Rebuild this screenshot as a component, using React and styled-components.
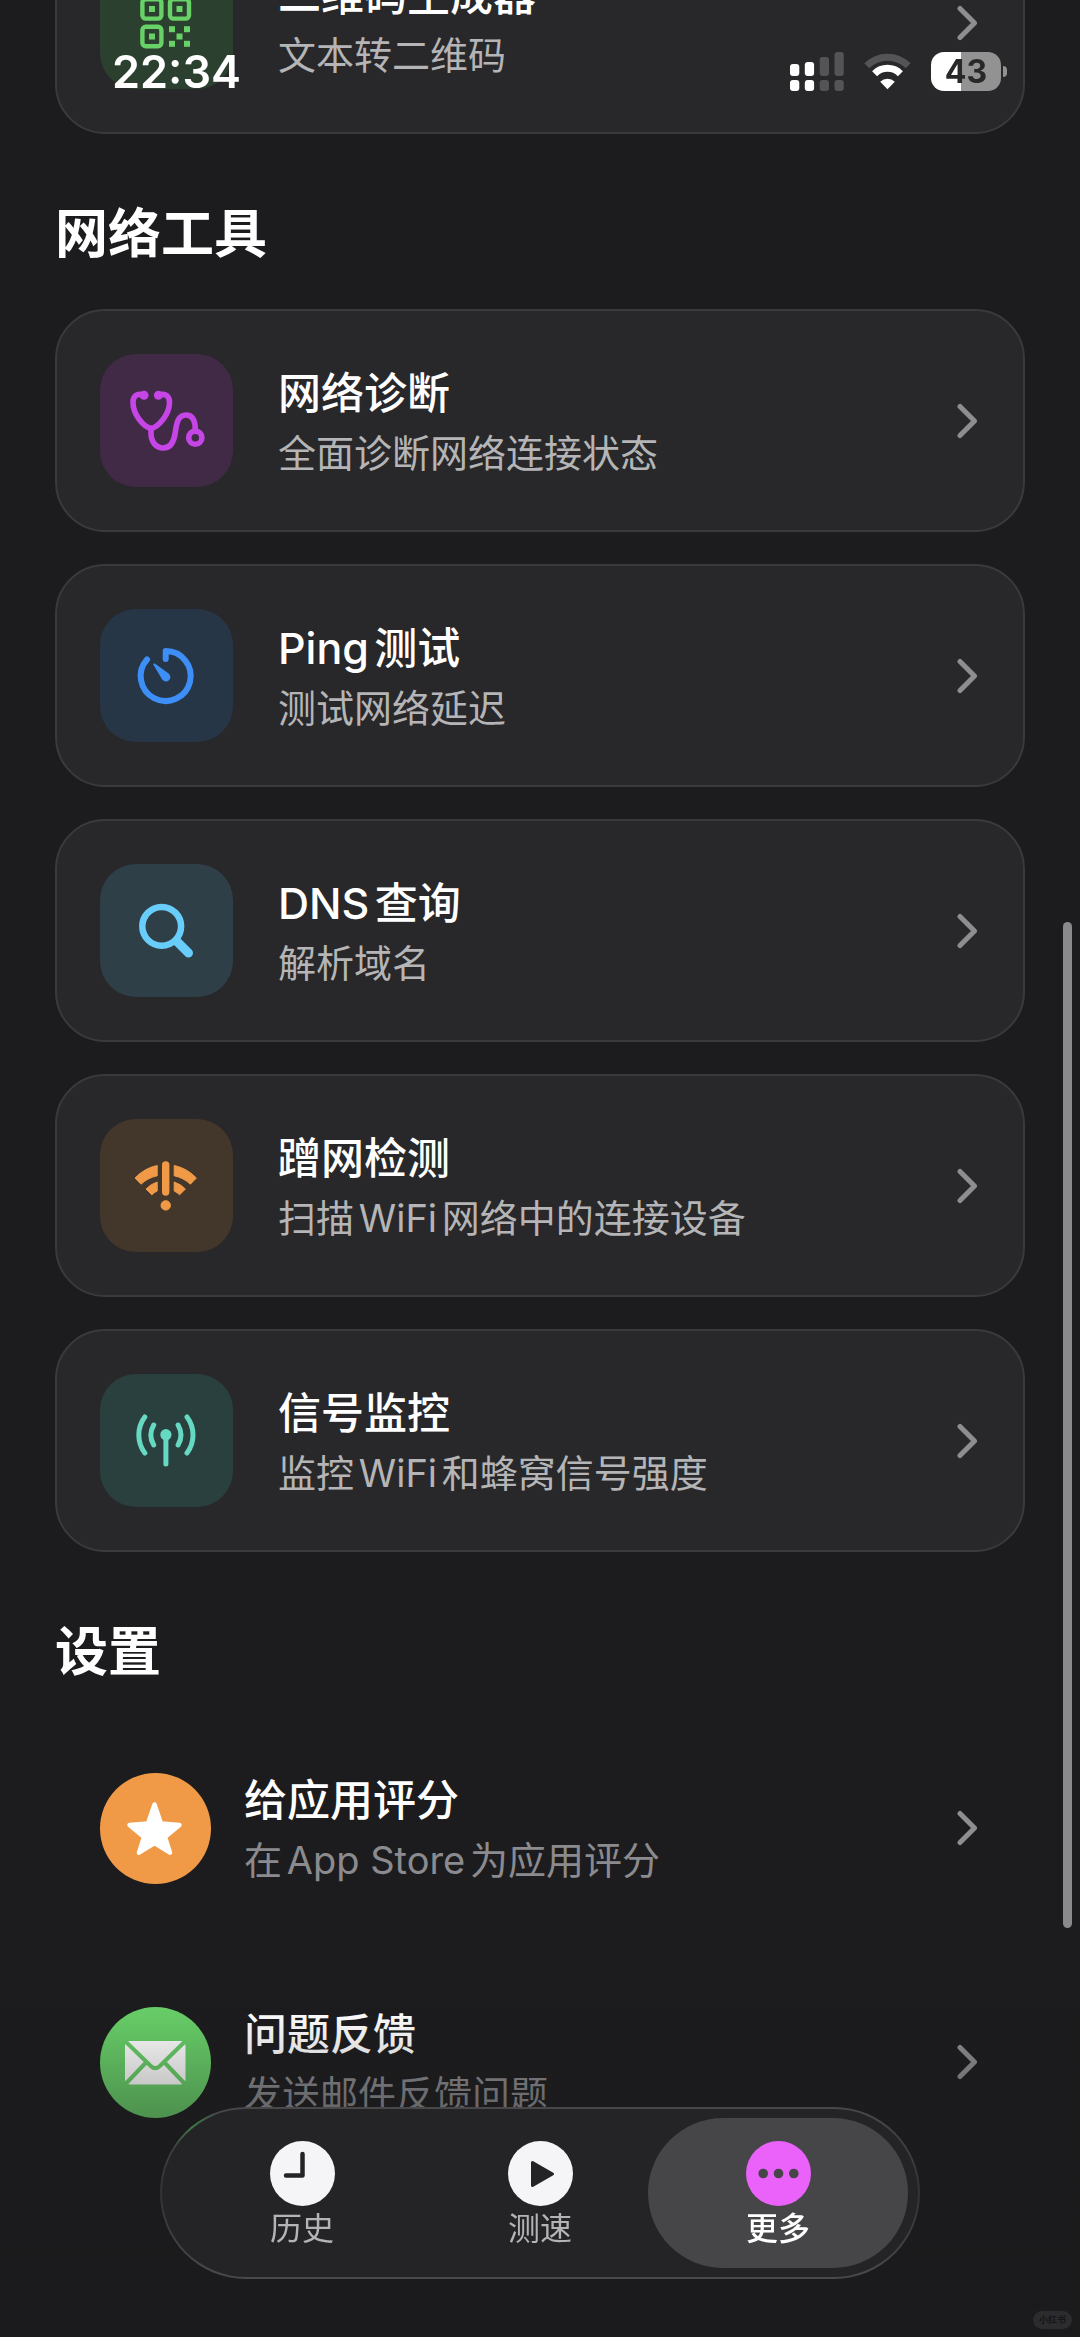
import styled, { createGlobalStyle } from 'styled-components';

const GlobalStyle = createGlobalStyle`
  * {
    box-sizing: border-box;
  }

  body {
    margin: 0;
    background: #1c1c1e;
    color: #ffffff;
    font-family: Inter, 'Noto Sans CJK SC', sans-serif;
    text-autospace: normal;
  }
`;

const Screen = styled.div`
  min-height: 100vh;
  overflow: hidden;
`;

const StatusBar = styled.header`
  position: fixed;
  top: 0;
  left: 0;
  right: 0;
  z-index: 3;
  display: flex;
  align-items: center;
  justify-content: space-between;
  height: 91px;
  padding: 52px 73px 0 112px;
  pointer-events: none;
`;

const Clock = styled.time`
  font-size: 45px;
  font-weight: 600;
  line-height: 39px;
`;

const StatusIcons = styled.div`
  display: flex;
  align-items: center;
  gap: 20px;
`;

const Battery = styled.div`
  display: flex;
  align-items: center;
  gap: 2px;
`;

const BatteryBody = styled.span`
  width: 70px;
  height: 39px;
  border-radius: 13px;
  background: linear-gradient(to right, #ffffff 43%, #929293 43%);
  color: #28282a;
  font-size: 32px;
  font-weight: 700;
  line-height: 39px;
  text-align: center;
`;

const BatteryTip = styled.span`
  width: 4px;
  height: 11px;
  border-radius: 0 6px 6px 0;
  background: #929293;
`;

const Content = styled.main`
  margin-top: -89px;
  padding: 0 55px;
`;

const Section = styled.section`
  & + & {
    margin-top: 68px;
  }
`;

const Heading = styled.h2`
  margin: 0 0 43px;
  font-size: 53px;
  font-weight: 700;
  line-height: 64px;
`;

const List = styled.ul`
  display: flex;
  flex-direction: column;
  gap: 32px;
  margin: 0;
  padding: 0;
  list-style: none;
`;

const Row = styled.a`
  display: flex;
  align-items: center;
  gap: 33px;
  padding: 44px 45px;
  color: inherit;
  text-decoration: none;
`;

const Card = styled(Row)`
  gap: 45px;
  padding: 43px;
  border: 2px solid #3a3a3c;
  border-radius: 50px;
  background: #28282a;
`;

const Tile = styled.svg`
  flex: none;
  width: 133px;
  height: 133px;
  border-radius: 36px;
  background: ${({ $bg }) => $bg};
  color: ${({ $color }) => $color};
`;

const Badge = styled.svg`
  flex: none;
  width: 111px;
  height: 111px;
  border-radius: 50%;
  background: ${({ $bg }) => $bg};
  color: ${({ $bg }) => $bg};
`;

const Texts = styled.div`
  display: flex;
  flex: 1;
  flex-direction: column;
  gap: 6px;
  min-width: 0;
`;

const Title = styled.span`
  font-size: 43px;
  font-weight: 500;
  line-height: 58px;
`;

const Subtitle = styled.span`
  color: ${({ $dim }) => ($dim ? '#8b8b8f' : '#b5b5b7')};
  font-size: 38px;
  line-height: 50px;
`;

const Arrow = styled.svg`
  flex: none;
  width: 26px;
  height: 36px;
`;

const ScrollThumb = styled.div`
  position: fixed;
  top: 922px;
  right: 8px;
  z-index: 3;
  width: 9px;
  height: 1006px;
  border-radius: 5px;
  background: #8a8a8c;
`;

const BottomFade = styled.div`
  position: fixed;
  left: 0;
  right: 0;
  bottom: 0;
  height: 330px;
  background: linear-gradient(
    rgba(28, 28, 30, 0),
    rgba(28, 28, 30, 0.35) 34%,
    #1b1b1d
  );
  pointer-events: none;
`;

const TabBar = styled.nav`
  position: fixed;
  left: 160px;
  right: 160px;
  bottom: 58px;
  display: flex;
  padding: 9px 21px;
  border: 2px solid transparent;
  border-radius: 86px;
  background:
    linear-gradient(#242427, #242427) padding-box,
    radial-gradient(circle at 32px 20px, #3c7a44, transparent 28px) border-box,
    linear-gradient(#48484a, #323234 50%, #4a4a4c) border-box;
`;

const Tab = styled.button`
  position: relative;
  display: flex;
  flex: 1;
  flex-direction: column;
  align-items: center;
  gap: 3px;
  padding: 23px 0 19px;
  border: 0;
  background: none;
  color: ${({ $active }) => ($active ? '#ffffff' : '#b4b4b7')};
  font-family: inherit;
  font-size: 32px;
  font-weight: ${({ $active }) => ($active ? 500 : 400)};
  line-height: 40px;
  cursor: pointer;

  &::before {
    content: '';
    position: absolute;
    inset: 0 -11px;
    border-radius: 75px;
    background: ${({ $active }) => ($active ? '#464648' : 'none')};
  }
`;

const TabIcon = styled.svg`
  position: relative;
  width: 65px;
  height: 65px;
`;

const TabLabel = styled.span`
  position: relative;
`;

const Watermark = styled.span`
  position: fixed;
  right: 8px;
  bottom: 8px;
  padding: 0 6px;
  border-radius: 9px;
  background: #2c2c2e;
  color: #161617;
  font-size: 9px;
  font-weight: 700;
  line-height: 18px;
`;

const QrIcon = () => (
  <g fill="currentColor">
    <g fill="none" stroke="currentColor" strokeWidth="4.4">
      <rect x="42.4" y="43.2" width="19" height="19.4" rx="3.4" />
      <rect x="70" y="43.2" width="19" height="19.4" rx="3.4" />
      <rect x="42.4" y="70.8" width="19" height="19.4" rx="3.4" />
    </g>
    <rect x="49" y="50" width="6" height="6" />
    <rect x="76.5" y="50" width="6" height="6" />
    <rect x="49" y="77.5" width="6" height="6" />
    <rect x="69" y="70.2" width="6" height="6" />
    <rect x="84" y="70.2" width="6" height="6" />
    <rect x="76.5" y="77.5" width="6" height="6" />
    <rect x="69" y="84.8" width="6" height="6" />
    <rect x="84" y="84.8" width="6" height="6" />
  </g>
);

const StethoscopeIcon = () => (
  <g fill="none" stroke="currentColor" strokeWidth="5.6" strokeLinecap="round">
    <path d="M43 41C37 39 33 42 33 48.5C33 60 43 72.5 51 74.5C59 72.5 69.5 60 69.5 48.5C69.5 42 65.5 39 59 41" />
    <path d="M51 74.5V79C51 88 56 94 63.3 94C71 94 74 87 75.2 79C76.5 69 78 61 86 61C93 61 95.3 68 95.3 76" />
    <circle cx="95.3" cy="83.7" r="6.6" />
    <circle cx="44" cy="41.3" r="4.5" fill="currentColor" stroke="none" />
    <circle cx="58.4" cy="41.3" r="4.5" fill="currentColor" stroke="none" />
  </g>
);

const TimerIcon = () => (
  <g>
    <path
      d="M65.7 50V42A25 25 0 1 1 47 50.4"
      fill="none"
      stroke="currentColor"
      strokeWidth="6"
      strokeLinecap="round"
      strokeLinejoin="round"
    />
    <path
      d="M53.4 55.8Q53 54 54.8 54.5L68.6 64.4A4.5 4.5 0 1 1 62.2 70.6Z"
      fill="currentColor"
    />
  </g>
);

const SearchIcon = () => (
  <g fill="none" stroke="currentColor" strokeLinecap="round">
    <circle cx="61.7" cy="62.3" r="19.4" strokeWidth="6.5" />
    <path d="M77 77.5L88.5 89" strokeWidth="9" />
  </g>
);

const WifiAlertIcon = () => (
  <g fill="currentColor" stroke="currentColor" strokeLinejoin="round">
    <path d="M57.2 46.5A43 43 0 0 0 35 59L41 65.2A34 34 0 0 1 57.2 56.8Z" />
    <path d="M74.2 46.5A43 43 0 0 1 96.4 59L90.4 65.2A34 34 0 0 0 74.2 56.8Z" />
    <path d="M57.2 63A27 27 0 0 0 46 70L51.8 75.8A19 19 0 0 1 57.2 72Z" />
    <path d="M74.2 63A27 27 0 0 1 85.4 70L79.6 75.8A19 19 0 0 0 74.2 72Z" />
    <path d="M65.7 46V73" strokeWidth="7.4" strokeLinecap="round" />
    <circle cx="65.7" cy="86.4" r="4.7" />
  </g>
);

const AntennaIcon = () => (
  <g fill="none" stroke="currentColor" strokeWidth="5" strokeLinecap="round">
    <path d="M53.7 51A20 20 0 0 0 53.7 71" />
    <path d="M78.1 51A20 20 0 0 1 78.1 71" />
    <path d="M44.8 43A30 30 0 0 0 44.8 79" />
    <path d="M87 43A30 30 0 0 1 87 79" />
    <path d="M65.9 61V90" />
    <circle cx="65.9" cy="60.7" r="5.6" fill="currentColor" stroke="none" />
  </g>
);

const StarIcon = () => (
  <path
    d="M54.5 31.5L61 50.5L79.5 52L65 64L70 79.7L54.5 70L39 79.7L44 64L29.5 52L48 50.5Z"
    fill="#ffffff"
    stroke="#ffffff"
    strokeWidth="4.5"
    strokeLinejoin="round"
  />
);

const MailIcon = () => (
  <g>
    <rect x="25" y="34" width="60.5" height="43.5" rx="5" fill="#ffffff" />
    <path
      d="M25 34L51 59.2Q55.3 63.2 59.6 59.2L85.5 34M25 77.5L46.5 55M85.5 77.5L64 55"
      fill="none"
      stroke="currentColor"
      strokeWidth="4"
    />
  </g>
);

const Chevron = () => (
  <Arrow viewBox="0 0 26 36" aria-hidden="true">
    <path
      d="M6 3.5L20.5 18L6 32.5"
      fill="none"
      stroke="#8e8e90"
      strokeWidth="5"
      strokeLinecap="round"
      strokeLinejoin="round"
    />
  </Arrow>
);

const qrTool = {
  title: '二维码生成器',
  subtitle: '文本转二维码',
  icon: QrIcon,
  color: '#68d168',
  bg: '#2c402f',
};

const networkTools = [
  {
    title: '网络诊断',
    subtitle: '全面诊断网络连接状态',
    icon: StethoscopeIcon,
    color: '#c645e6',
    bg: '#402a46',
  },
  {
    title: 'Ping测试',
    subtitle: '测试网络延迟',
    icon: TimerIcon,
    color: '#3d8ff7',
    bg: '#273646',
  },
  {
    title: 'DNS查询',
    subtitle: '解析域名',
    icon: SearchIcon,
    color: '#69cdfb',
    bg: '#2f3f47',
  },
  {
    title: '蹭网检测',
    subtitle: '扫描WiFi网络中的连接设备',
    icon: WifiAlertIcon,
    color: '#f09a48',
    bg: '#43372b',
  },
  {
    title: '信号监控',
    subtitle: '监控WiFi和蜂窝信号强度',
    icon: AntennaIcon,
    color: '#66d9c2',
    bg: '#2a403e',
  },
];

const settings = [
  {
    title: '给应用评分',
    subtitle: '在App Store为应用评分',
    icon: StarIcon,
    bg: '#f09a48',
  },
  {
    title: '问题反馈',
    subtitle: '发送邮件反馈问题',
    icon: MailIcon,
    bg: '#68cf68',
  },
];

const ToolCard = ({ tool }) => {
  const Icon = tool.icon;
  return (
    <li>
      <Card href="#">
        <Tile viewBox="0 0 133 133" $bg={tool.bg} $color={tool.color} aria-hidden="true">
          <Icon />
        </Tile>
        <Texts>
          <Title>{tool.title}</Title>
          <Subtitle>{tool.subtitle}</Subtitle>
        </Texts>
        <Chevron />
      </Card>
    </li>
  );
};

const SettingRow = ({ item }) => {
  const Icon = item.icon;
  return (
    <li>
      <Row href="#">
        <Badge viewBox="0 0 111 111" $bg={item.bg} aria-hidden="true">
          <Icon />
        </Badge>
        <Texts>
          <Title>{item.title}</Title>
          <Subtitle $dim>{item.subtitle}</Subtitle>
        </Texts>
        <Chevron />
      </Row>
    </li>
  );
};

const Status = () => (
  <StatusBar>
    <Clock>22:34</Clock>
    <StatusIcons>
      <svg width="54" height="39" viewBox="0 0 54 39" aria-hidden="true">
        <g fill="#ffffff">
          <rect x="0" y="12" width="9.3" height="12" rx="3" />
          <rect x="0" y="28" width="9.3" height="11" rx="3" />
          <rect x="14.8" y="10" width="9.3" height="14" rx="3" />
          <rect x="14.8" y="28" width="9.3" height="11" rx="3" />
        </g>
        <g fill="#545456">
          <rect x="29.7" y="5" width="9.3" height="19" rx="3" />
          <rect x="29.7" y="28" width="9.3" height="11" rx="3" />
          <rect x="44.5" y="0" width="9.3" height="24" rx="3" />
          <rect x="44.5" y="28" width="9.3" height="11" rx="3" />
        </g>
      </svg>
      <svg width="47" height="39" viewBox="0 0 47 39" aria-hidden="true">
        <path d="M2.8 13.7A29.3 29.3 0 0 1 44.2 13.7" fill="none" stroke="#545456" strokeWidth="7" />
        <path d="M10.6 21.7A18.2 18.2 0 0 1 36.4 21.7" fill="none" stroke="#ffffff" strokeWidth="7" />
        <path d="M23.5 37.3L16.2 29.8A10.4 10.4 0 0 1 30.8 29.8Z" fill="#ffffff" />
      </svg>
      <Battery>
        <BatteryBody>43</BatteryBody>
        <BatteryTip />
      </Battery>
    </StatusIcons>
  </StatusBar>
);

const App = () => {
  return (
    <Screen>
      <GlobalStyle />
      <Status />
      <Content>
        <Section>
          <List>
            <ToolCard tool={qrTool} />
          </List>
        </Section>
        <Section>
          <Heading>网络工具</Heading>
          <List>
            {networkTools.map((tool) => (
              <ToolCard key={tool.title} tool={tool} />
            ))}
          </List>
        </Section>
        <Section>
          <Heading>设置</Heading>
          <List>
            {settings.map((item) => (
              <SettingRow key={item.title} item={item} />
            ))}
          </List>
        </Section>
      </Content>
      <ScrollThumb />
      <BottomFade />
      <TabBar>
        <Tab type="button">
          <TabIcon viewBox="0 0 65 65" aria-hidden="true">
            <circle cx="32.5" cy="32.5" r="32.5" fill="#f5f5f8" />
            <path
              d="M32.5 13V34.5H16"
              fill="none"
              stroke="#242427"
              strokeWidth="4.5"
              strokeLinecap="round"
              strokeLinejoin="round"
            />
          </TabIcon>
          <TabLabel>历史</TabLabel>
        </Tab>
        <Tab type="button">
          <TabIcon viewBox="0 0 65 65" aria-hidden="true">
            <circle cx="32.5" cy="32.5" r="32.5" fill="#f5f5f8" />
            <path
              d="M24.5 21.5V44.5L44.5 33Z"
              fill="#242427"
              stroke="#242427"
              strokeWidth="3"
              strokeLinejoin="round"
            />
          </TabIcon>
          <TabLabel>测速</TabLabel>
        </Tab>
        <Tab type="button" $active aria-current="page">
          <TabIcon viewBox="0 0 65 65" aria-hidden="true">
            <circle cx="32.5" cy="32.5" r="32.5" fill="#eb62fb" />
            <g fill="#464648">
              <circle cx="17.2" cy="32.5" r="4.8" />
              <circle cx="32.5" cy="32.5" r="4.8" />
              <circle cx="47.8" cy="32.5" r="4.8" />
            </g>
          </TabIcon>
          <TabLabel>更多</TabLabel>
        </Tab>
      </TabBar>
      <Watermark>小红书</Watermark>
    </Screen>
  );
};

export default App;
